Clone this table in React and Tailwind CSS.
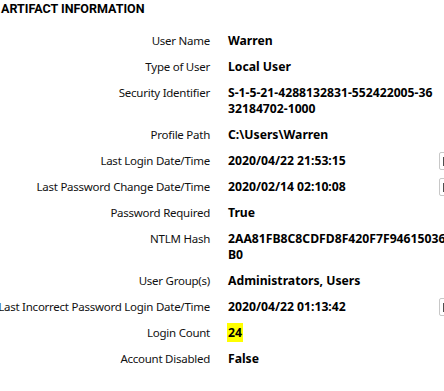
import React from "react";

const rows = [
  { label: "User Name", value: ["Warren"] },
  { label: "Type of User", value: ["Local User"] },
  { label: "Security Identifier", value: ["S-1-5-21-4288132831-552422005-36", "32184702-1000"] },
  { label: "Profile Path", value: ["C:\\Users\\Warren"] },
  { label: "Last Login Date/Time", value: ["2020/04/22 21:53:15"], btn: true },
  { label: "Last Password Change Date/Time", value: ["2020/02/14 02:10:08"], btn: true },
  { label: "Password Required", value: ["True"] },
  { label: "NTLM Hash", value: ["2AA81FB8C8CDFD8F420F7F94615036", "B0"] },
  { label: "User Group(s)", value: ["Administrators, Users"] },
  { label: "Last Incorrect Password Login Date/Time", value: ["2020/04/22 01:13:42"], btn: true },
  { label: "Login Count", value: ["24"], hl: true },
  { label: "Account Disabled", value: ["False"] },
];

function Btn() {
  return (
    <div className="absolute left-[439px] top-1/2 -translate-y-1/2 w-[22px] h-[18px] border border-[#c8c8c8] bg-white rounded-[2px] flex items-center pl-[3px]">
      <div className="w-[2px] h-[9px] bg-[#505050]" />
    </div>
  );
}

export default function App() {
  return (
    <div
      className="w-[444px] h-[391px] overflow-hidden bg-white relative"
      style={{ fontFamily: '"Noto Sans", sans-serif' }}
    >
      <div
        className="pl-px h-[18px] leading-[18px] text-[12.5px] font-bold text-black"
        style={{ fontFamily: 'Roboto, "Noto Sans", sans-serif' }}
      >
        ARTIFACT INFORMATION
      </div>
      <div className="mt-[10px] flex flex-col">
        {rows.map((r, i) => (
          <div key={i} className="relative flex py-[5px] leading-[16px]">
            <div className="w-[210px] shrink-0 flex justify-end">
              <span className="whitespace-nowrap text-[11.5px] tracking-[-0.25px] text-[#111111]">{r.label}</span>
            </div>
            <div className="ml-[18px] text-[12.2px] font-bold text-black">
              {r.value.map((v, j) => (
                <div key={j} className="whitespace-nowrap">
                  {r.hl ? <span className="bg-[#ffff00] py-px px-px -mx-px">{v}</span> : v}
                </div>
              ))}
            </div>
            {r.btn && <Btn />}
          </div>
        ))}
      </div>
    </div>
  );
}
